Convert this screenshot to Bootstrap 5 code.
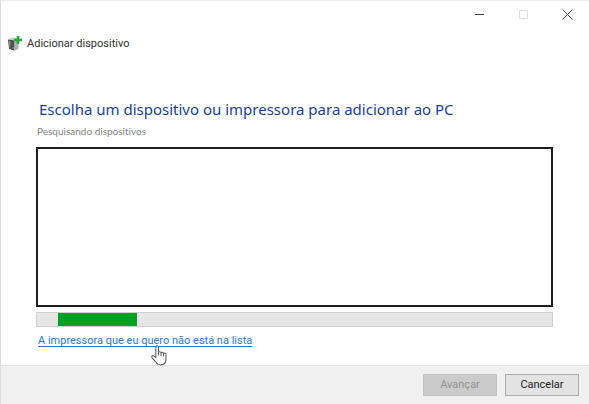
<!DOCTYPE html>
<html lang="pt-BR">
<head>
<meta charset="utf-8">
<meta name="viewport" content="width=device-width, initial-scale=1">
<title>Adicionar dispositivo</title>
<link href="https://cdn.jsdelivr.net/npm/bootstrap@5.3.0/dist/css/bootstrap.min.css" rel="stylesheet">
<style>
  body { font-family: Roboto, "Noto Sans", sans-serif; font-size: 11px; line-height: 16px; color: #333; background: #fff; }
  .wizard { border-left: 1px solid #dcdcdc; border-top: 1px solid #ececec; }
  .caption-bar { height: 27px; }
  .caption-btn { width: 44px; height: 27px; color: #444; }
  .caption-btn:disabled { color: #dedede; opacity: 1; border: 0; }
  .wizard-title { padding: 7px 7px 0; gap: 5px; line-height: 17px; }
  .wizard-body { padding: 45px 36px 0 35px; }
  .wizard-heading { font-family: "Noto Sans", "Open Sans", sans-serif; font-size: 15px; line-height: 24px; color: #1c3f94; padding-left: 3px; }
  .wizard-status { font-family: Lato, sans-serif; font-variant-ligatures: none; font-size: 10px; line-height: 16px; color: #858585; padding-left: 1px; margin-top: 2px; margin-bottom: 8px; }
  .device-list { height: 160px; border: 2px solid #1e1e1e; }
  .scan-progress { height: 15px; margin-top: 5px; background: #e6e6e6; border: 1px solid #cfcfcf; }
  .scan-progress .progress-bar { background: #06a025; width: 79px; margin-left: 21px; }
  .wizard-link { color: #2a7ad2; margin: 6px 0 0 2px; }
  .wizard-link a { text-underline-offset: 2px; }
  .wizard-footer { background: #f0f0f0; border-top: 1px solid #e2e2e2; padding: 8px 10px 8px; gap: 8px; }
  .wizard-btn { width: 74px; height: 22px; font-size: 11px; line-height: 16px; color: #222; background: #e3e3e3; border: 1px solid #adadad; }
  .wizard-btn:disabled { color: #939393; background: #cbcbcb; border-color: #c2c2c2; opacity: 1; }
  .pointer-hand { left: 112px; top: 11px; }
</style>
<script src="https://cdn.jsdelivr.net/npm/bootstrap@5.3.0/dist/js/bootstrap.bundle.min.js"></script>
</head>
<body>
<div class="wizard d-flex flex-column min-vh-100">
  <header>
    <div class="caption-bar d-flex justify-content-end">
      <button type="button" class="caption-btn btn p-0 rounded-0 border-0 d-flex align-items-center justify-content-center" aria-label="Minimizar">
        <svg width="11" height="11" viewBox="0 0 11 11" stroke="currentColor" fill="none"><path d="M1 5.500h9"/></svg>
      </button>
      <button type="button" class="caption-btn btn p-0 rounded-0 border-0 d-flex align-items-center justify-content-center" aria-label="Maximizar" disabled>
        <svg width="11" height="11" viewBox="0 0 11 11" stroke="currentColor" fill="none"><path d="M1.500 1.500h8v8h-8z"/></svg>
      </button>
      <button type="button" class="caption-btn btn p-0 rounded-0 border-0 d-flex align-items-center justify-content-center" aria-label="Fechar">
        <svg width="11" height="11" viewBox="0 0 11 11" stroke="currentColor" fill="none"><path d="M.5.5l10 10M10.500.5l-10 10"/></svg>
      </button>
    </div>
    <div class="wizard-title d-flex align-items-center">
      <svg width="14" height="16" viewBox="0 0 14 16" aria-hidden="true">
        <path d="M0 3.500l3.500-2 5 .5v2.500z" fill="#c9c9c9"/>
        <path d="M0 3.500l6.500 1v10L1 13z" fill="#454846"/>
        <path d="M6.500 4.500L10.500 3v10l-4 1.500z" fill="#aeb0af"/>
        <path d="M1 4.700l1.300.3v7.500L1.500 12z" fill="#a0a4a1"/>
        <path d="M3.500 6.500l2 .3M3.500 8.500l2 .3" stroke="#777" stroke-width=".7"/>
        <circle cx="5" cy="12" r=".9" fill="#53b45d"/>
        <path d="M8.700 0h2.600v2.700H14v2.600h-2.700V8H8.700V5.300H6V2.700h2.700z" fill="#1faa35"/>
      </svg>
      <span>Adicionar dispositivo</span>
    </div>
  </header>
  <main class="wizard-body flex-grow-1">
    <h1 class="wizard-heading fw-normal mb-0">Escolha um dispositivo ou impressora para adicionar ao PC</h1>
    <p class="wizard-status">Pesquisando dispositivos</p>
    <div class="device-list bg-white" role="listbox" aria-label="Dispositivos" tabindex="0"></div>
    <div class="scan-progress progress rounded-0" role="progressbar" aria-label="Pesquisando dispositivos">
      <div class="progress-bar"></div>
    </div>
    <div class="d-flex">
      <div class="wizard-link position-relative">
        <a href="#" class="text-reset">A impressora que eu quero não está na lista</a>
        <svg class="pointer-hand position-absolute" width="19" height="23" viewBox="0 0 18 22" aria-hidden="true">
          <path d="M5.500 13V3.200c0-2 2.500-2 2.500 0V8c.5-1 2.300-.8 2.500.4.7-.8 2.200-.5 2.400.6.900-.6 2.300 0 2.300 1.300v4c0 3.200-1.700 5.700-5 5.700-2.700 0-4-1.300-5.200-3.200L1.800 13c-.8-1.500 1-2.600 2.100-1.500z" fill="#fff" stroke="#5a5a5a" stroke-linejoin="round"/>
          <path d="M8 8v3M10.500 8.400V11.500M12.900 9v3" stroke="#5a5a5a" fill="none"/>
        </svg>
      </div>
    </div>
  </main>
  <footer class="wizard-footer d-flex justify-content-end">
    <button type="button" class="wizard-btn btn p-0 rounded-0" disabled>Avançar</button>
    <button type="button" class="wizard-btn btn p-0 rounded-0">Cancelar</button>
  </footer>
</div>
</body>
</html>
